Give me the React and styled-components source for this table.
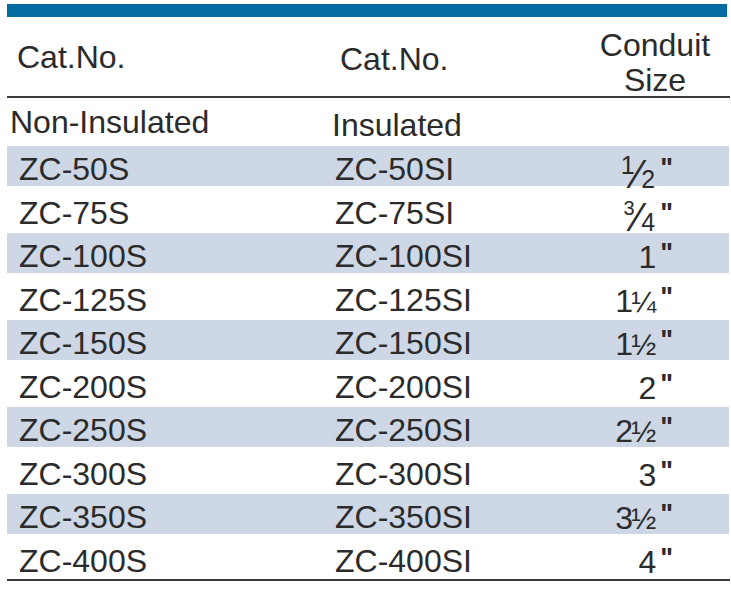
import React from 'react';
import styled, { createGlobalStyle } from 'styled-components';

const GlobalStyle = createGlobalStyle`
  html, body { margin: 0; padding: 0; background: #ffffff; }
  body {
    font-family: "Liberation Sans", Arial, sans-serif;
    color: #2b2b2b;
  }
`;

const Sheet = styled.div`
  width: 731px;
  height: 608px;
  box-sizing: border-box;
  padding: 4px 2px 0 7px;
`;

const TopBar = styled.div`
  height: 13px;
  margin-right: 2px;
  background: #046ca2;
`;

const cols = `318px 255px 1fr`;

const HeaderRow = styled.div`
  display: grid;
  grid-template-columns: ${cols};
  height: 79px;
  margin-right: -1px;
  border-bottom: 2px solid #3a3a3a;
`;

const SubRow = styled.div`
  display: grid;
  grid-template-columns: ${cols};
  height: 46px;
`;

const Cell = styled.div`
  font-size: 32px;
  line-height: 36px;
  padding-top: ${(p) => p.$top || 0}px;
  padding-left: ${(p) => p.$left || 0}px;
  text-align: ${(p) => (p.$center ? 'center' : 'left')};
  white-space: nowrap;
`;

const Stacked = styled(Cell)`
  line-height: 35px;
`;

const Body = styled.div`
  display: flex;
  flex-direction: column;
  border-bottom: 2px solid #3a3a3a;
  margin-right: -1px;
  padding-right: 1px;
`;

const DataRow = styled.div`
  display: grid;
  grid-template-columns: ${cols};
  height: 39.5px;
  margin: 2px 0;
  background: ${(p) => (p.$shaded ? '#cdd7e5' : 'transparent')};
`;

const DataCell = styled.div`
  font-size: 32px;
  line-height: 32.5px;
  padding-top: 7px;
  padding-left: ${(p) => p.$left || 0}px;
  white-space: nowrap;
`;

const SizeCell = styled.div`
  font-size: 32px;
  line-height: 32.5px;
  height: 32.5px;
  padding-top: 7px;
  padding-right: 56px;
  text-align: right;
  white-space: nowrap;
`;

const Whole = styled.span`
  font-size: 32px;
  letter-spacing: ${(p) => (p.$tight ? -2 : 0)}px;
`;

const Vulgar = styled.span`
  font-size: 30px;
`;

const Num = styled.span`
  font-size: ${(p) => p.$size}px;
  line-height: 1;
  vertical-align: ${(p) => p.$up}px;
`;

const Slash = styled.span`
  font-size: 40px;
  line-height: 1;
  vertical-align: -2px;
`;

const Den = styled.span`
  font-size: ${(p) => p.$size}px;
  line-height: 1;
  vertical-align: -2px;
`;

const Inch = styled.span`
  font-weight: bold;
  font-size: 27px;
  line-height: 1;
  vertical-align: ${(p) => p.$raise}px;
  margin-left: ${(p) => p.$gap}px;
`;

const rows = [
  { a: 'ZC-50S', b: 'ZC-50SI', num: '1', den: '2', ns: 25, ds: 25, up: 12, raise: 9 },
  { a: 'ZC-75S', b: 'ZC-75SI', num: '3', den: '4', ns: 20, ds: 25, up: 14, raise: 7 },
  { a: 'ZC-100S', b: 'ZC-100SI', whole: '1' },
  { a: 'ZC-125S', b: 'ZC-125SI', whole: '1', frac: '¼' },
  { a: 'ZC-150S', b: 'ZC-150SI', whole: '1', frac: '½' },
  { a: 'ZC-200S', b: 'ZC-200SI', whole: '2' },
  { a: 'ZC-250S', b: 'ZC-250SI', whole: '2', frac: '½' },
  { a: 'ZC-300S', b: 'ZC-300SI', whole: '3' },
  { a: 'ZC-350S', b: 'ZC-350SI', whole: '3', frac: '½' },
  { a: 'ZC-400S', b: 'ZC-400SI', whole: '4' },
];

function Size({ r }) {
  return (
    <SizeCell>
      {r.num && (
        <>
          <Num $size={r.ns} $up={r.up}>{r.num}</Num>
          <Slash>⁄</Slash>
          <Den $size={r.ds}>{r.den}</Den>
        </>
      )}
      {r.whole && <Whole $tight={!!r.frac}>{r.whole}</Whole>}
      {r.frac && <Vulgar>{r.frac}</Vulgar>}
      <Inch $raise={r.raise || 6} $gap={r.frac ? 4 : r.num ? 5 : 4}>"</Inch>
    </SizeCell>
  );
}

export default function App() {
  return (
    <>
      <GlobalStyle />
      <Sheet>
        <TopBar />
        <HeaderRow>
          <Cell $top={22} $left={10}>Cat.No.</Cell>
          <Cell $top={24} $left={15}>Cat.No.</Cell>
          <Stacked $top={11} $center>
            Conduit
            <br />
            Size
          </Stacked>
        </HeaderRow>
        <SubRow>
          <Cell $top={6} $left={3}>Non-Insulated</Cell>
          <Cell $top={9} $left={7}>Insulated</Cell>
          <Cell />
        </SubRow>
        <Body>
          {rows.map((r, i) => (
            <DataRow key={r.a} $shaded={i % 2 === 0}>
              <DataCell $left={12}>{r.a}</DataCell>
              <DataCell $left={10}>{r.b}</DataCell>
              <Size r={r} />
            </DataRow>
          ))}
        </Body>
      </Sheet>
    </>
  );
}
